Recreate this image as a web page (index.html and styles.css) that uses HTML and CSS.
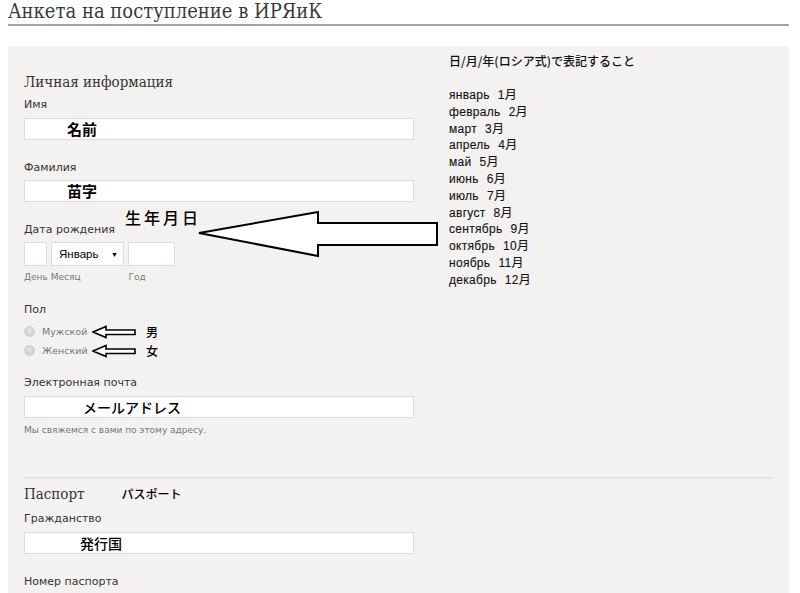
FILE: index.html
```html
<!DOCTYPE html>
<html lang="ru">
<head>
<meta charset="utf-8">
<title>Анкета на поступление в ИРЯиК</title>
<link rel="stylesheet" href="styles.css">
</head>
<body>
<div class="page">
  <h1 class="title">Анкета на поступление в ИРЯиК</h1>
  <div class="panel">
    <div class="top">
      <div class="col first">
        <h2 class="section">Личная информация</h2>
        <div class="label">Имя</div>
        <div class="input"><span class="jp">名前</span></div>
        <div class="label gap">Фамилия</div>
        <div class="input"><span class="jp">苗字</span></div>
        <div class="label gap date-label">Дата рождения<span class="jp-note">生年月日</span></div>
        <div class="date-row">
          <div class="box day"></div>
          <div class="box month"><span>Январь</span><span class="caret">▼</span></div>
          <div class="box year"></div>
        </div>
        <div class="sub-row"><span class="sub">День</span><span class="sub">Месяц</span><span class="sub year-sub">Год</span></div>
        <div class="label gender">Пол</div>
        <div class="radios">
          <div class="radio-row"><span class="radio"></span><span class="radio-label">Мужской</span>
            <svg class="small-arrow" width="44" height="14" viewBox="0 0 44 14"><polygon points="1,7 14,1.5 14,5 43,5 43,9.5 14,9.5 14,12.5" fill="#fff" stroke="#000" stroke-width="1.6"/></svg>
            <span class="jp-mark">男</span></div>
          <div class="radio-row"><span class="radio"></span><span class="radio-label">Женский</span>
            <svg class="small-arrow" width="44" height="14" viewBox="0 0 44 14"><polygon points="1,7 14,1.5 14,5 43,5 43,9.5 14,9.5 14,12.5" fill="#fff" stroke="#000" stroke-width="1.6"/></svg>
            <span class="jp-mark">女</span></div>
        </div>
        <div class="label email">Электронная почта</div>
        <div class="input"><span class="jp jp-email">メールアドレス</span></div>
        <div class="hint">Мы свяжемся с вами по этому адресу.</div>
      </div>
      <div class="note">
        <div class="note-title">日/月/年(ロシア式)で表記すること</div>
        <ul class="months">
          <li><span class="m">январь</span>1月</li>
          <li><span class="m">февраль</span>2月</li>
          <li><span class="m">март</span>3月</li>
          <li><span class="m">апрель</span>4月</li>
          <li><span class="m">май</span>5月</li>
          <li><span class="m">июнь</span>6月</li>
          <li><span class="m">июль</span>7月</li>
          <li><span class="m">август</span>8月</li>
          <li><span class="m">сентябрь</span>9月</li>
          <li><span class="m">октябрь</span>10月</li>
          <li><span class="m">ноябрь</span>11月</li>
          <li><span class="m">декабрь</span>12月</li>
        </ul>
      </div>
    </div>
    <div class="separator"></div>
    <div class="col">
      <h2 class="section passport">Паспорт<span class="jp-inline">パスポート</span></h2>
      <div class="label">Гражданство</div>
      <div class="input"><span class="jp jp-country">発行国</span></div>
      <div class="label gap">Номер паспорта</div>
    </div>
  </div>
  <svg class="big-arrow" width="242" height="48" viewBox="0 0 242 48"><polygon points="2,22 121,1 121,12 240,12 240,34 121,34 121,45" fill="#fff" stroke="#000" stroke-width="2"/></svg>
</div>
</body>
</html>
```
FILE: styles.css
```css
html, body {
  margin: 0;
  padding: 0;
  background: #fff;
}
.page {
  position: relative;
  width: 781px;
  padding: 0 8px;
  font-family: "DejaVu Sans", Verdana, sans-serif;
  color: #333;
}
.title {
  margin: 0;
  height: 24px;
  font-family: "DejaVu Serif Condensed", "DejaVu Serif", serif;
  font-stretch: semi-condensed;
  font-weight: normal;
  font-size: 20px;
  line-height: 23px;
  color: #3a3a3a;
  border-bottom: 2px solid #a4a4a4;
}
.panel {
  margin-top: 20px;
  background: #f3f2f1;
  padding: 0 16px;
  height: 560px;
}
.top {
  display: flex;
}
.col {
  width: 390px;
}
.col.first {
  padding-top: 26px;
}
.section {
  margin: 0;
  font-family: "DejaVu Serif Condensed", "DejaVu Serif", serif;
  font-stretch: semi-condensed;
  font-weight: normal;
  font-size: 15px;
  line-height: 20px;
  color: #333;
}
.label {
  margin-top: 5px;
  font-size: 11px;
  line-height: 16px;
  color: #333;
}
.label.gap {
  margin-top: 20px;
}
.input {
  margin-top: 5px;
  height: 20px;
  background: #fff;
  border: 1px solid #dcdcdc;
  display: flex;
  align-items: center;
}
.label + .input { margin-top: 5px; }
.label.gap + .input { margin-top: 4px; }
.jp {
  font-family: "Noto Sans CJK JP", sans-serif;
  font-weight: 700;
  font-size: 15px;
  color: #000;
  padding-left: 42px;
  line-height: 20px;
}
.jp-email { padding-left: 58px; font-weight: 500; font-size: 14px; }
.jp-country { padding-left: 55px; font-size: 14px; font-weight: 500; }
.date-label {
  position: relative;
}
.jp-note {
  position: absolute;
  left: 101px;
  top: -13px;
  font-family: "Noto Sans CJK JP", sans-serif;
  font-weight: 500;
  font-size: 16px;
  letter-spacing: 3px;
  color: #000;
}
.date-row {
  display: flex;
  gap: 4px;
  margin-top: 4px;
}
.box {
  height: 22px;
  background: #fff;
  border: 1px solid #dcdcdc;
}
.day { width: 21px; }
.month {
  display: flex;
  align-items: center;
  justify-content: space-between;
  padding: 0 5px 0 7px;
  box-sizing: border-box;
  width: 73px;
  height: 24px;
  font-family: "Liberation Sans", Arial, sans-serif;
  font-size: 11.5px;
  color: #000;
}
.caret { font-size: 7px; }
.year { width: 45px; }
.sub-row {
  display: flex;
  margin-top: 4px;
  font-size: 9px;
  line-height: 14px;
  color: #777;
}
.sub { margin-right: 3px; }
.year-sub { margin-left: 45px; }
.gender { margin-top: 18px; }
.radios {
  margin-top: 4px;
}
.radio-row {
  display: flex;
  align-items: center;
  height: 19px;
  font-size: 9.5px;
  color: #777;
}
.radio {
  width: 9px;
  height: 9px;
  border-radius: 50%;
  background: radial-gradient(circle at 50% 40%, #e4e4e4, #c9c9c9);
  border: 1px solid #cfcfcf;
  margin-right: 7px;
}
.radio-label { width: 49px; }
.small-arrow { margin-left: 1px; }
.jp-mark {
  margin-left: 10px;
  font-family: "Noto Sans CJK JP", sans-serif;
  font-size: 12px;
  font-weight: 500;
  color: #000;
}
.email { margin-top: 15px; }
.hint {
  margin-top: 5px;
  font-size: 9px;
  line-height: 14px;
  color: #777;
}
.note {
  margin-left: 35px;
  padding-top: 7px;
  font-family: "Liberation Sans", "Noto Sans CJK JP", sans-serif;
  font-size: 12px;
  color: #111;
}
.note-title {
  line-height: 16px;
  font-family: "Noto Sans CJK JP", sans-serif;
  font-weight: 500;
}
.months {
  list-style: none;
  margin: 18px 0 0;
  padding: 0;
  line-height: 16.8px;
  font-weight: normal;
  color: #111;
  -webkit-text-stroke: 0.1px #111;
}
.months li {
  font-family: "Liberation Sans", "Noto Sans CJK JP", sans-serif;
  letter-spacing: 0.3px;
}
.m { margin-right: 8px; }
.separator {
  margin-top: 40px;
  height: 2px;
  background: #e6e5e4;
}
.passport {
  margin-top: 5px;
}
.jp-inline {
  margin-left: 37px;
  font-family: "Noto Sans CJK JP", sans-serif;
  font-size: 12px;
  font-weight: 500;
  color: #000;
}
.passport + .label { margin-top: 7px; }
.big-arrow {
  position: absolute;
  left: 197px;
  top: 211px;
}
```
